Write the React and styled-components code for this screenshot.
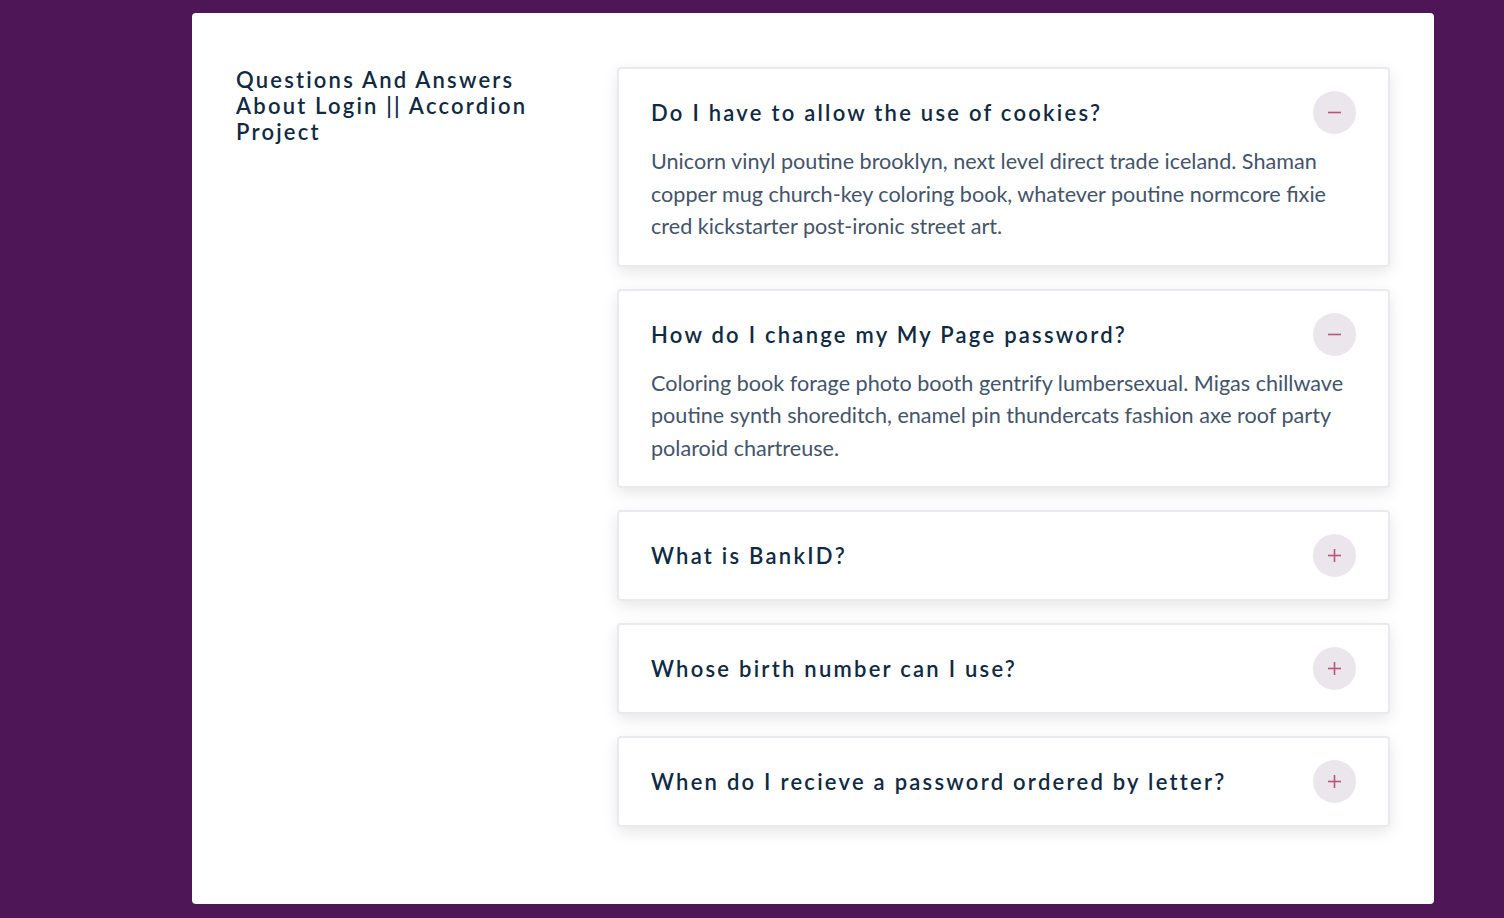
import React, { useState } from 'react'
import styled, { createGlobalStyle } from 'styled-components'

const GlobalStyle = createGlobalStyle`
  * { box-sizing: border-box; }
  body {
    margin: 0;
    background: #4e1657;
    font-family: Lato, "Open Sans", sans-serif;
  }
`

const Page = styled.main`
  min-height: 918px;
  padding: 13px 70px 14px 192px;
`

const Container = styled.section`
  width: 1242px;
  min-height: 891px;
  background: #ffffff;
  border-radius: 4px;
  padding: 54px 44px;
  display: grid;
  grid-template-columns: 341px 1fr;
  column-gap: 40px;
  align-items: start;
`

const Title = styled.h3`
  margin: 0;
  max-width: 310px;
  font-size: 22px;
  line-height: 26px;
  font-weight: 600;
  letter-spacing: 2.2px;
  color: #102a42;
`

const List = styled.div`
  display: flex;
  flex-direction: column;
  gap: 22px;
`

const Card = styled.article`
  border: 2px solid #e8eaed;
  border-radius: 4px;
  padding: 22px 32px;
  background: #fff;
  box-shadow: 0 5px 15px rgba(0, 0, 0, 0.1);
`

const Header = styled.header`
  display: flex;
  align-items: center;
  justify-content: space-between;
  height: 43px;
`

const Question = styled.h4`
  margin: 0;
  font-size: 22px;
  font-weight: 600;
  letter-spacing: 2.25px;
  color: #102a42;
`

const Toggle = styled.button`
  width: 43px;
  height: 43px;
  border: none;
  border-radius: 50%;
  background: #ebe6ec;
  color: #b4577f;
  display: flex;
  align-items: center;
  justify-content: center;
  cursor: pointer;
  flex-shrink: 0;
`

const Answer = styled.p`
  margin: 11px 0 0;
  font-size: 21.6px;
  line-height: 32.5px;
  color: #44546a;
`

const Icon = ({ open }) => (
  <svg width="15" height="15" viewBox="0 0 15 15">
    <path d="M1 7.5h13" stroke="currentColor" strokeWidth="1.6" />
    {!open && <path d="M7.5 1v13" stroke="currentColor" strokeWidth="1.6" />}
  </svg>
)

const questions = [
  {
    id: 1,
    title: 'Do I have to allow the use of cookies?',
    info: 'Unicorn vinyl poutine brooklyn, next level direct trade iceland. Shaman copper mug church-key coloring book, whatever poutine normcore fixie cred kickstarter post-ironic street art.',
    open: true,
  },
  {
    id: 2,
    title: 'How do I change my My Page password?',
    info: 'Coloring book forage photo booth gentrify lumbersexual. Migas chillwave poutine synth shoreditch, enamel pin thundercats fashion axe roof party polaroid chartreuse.',
    open: true,
  },
  {
    id: 3,
    title: 'What is BankID?',
    info: 'Enamel pin fam sustainable woke whatever venmo. Authentic asymmetrical put a bird on it, lumbersexual activated charcoal kinfolk banjo cred pickled sartorial.',
  },
  {
    id: 4,
    title: 'Whose birth number can I use?',
    info: 'Edison bulb direct trade gentrify beard lo-fi seitan sustainable roof party franzen occupy squid. Knausgaard cronut succulents, scenester readymade shabby chic skateboard.',
  },
  {
    id: 5,
    title: 'When do I recieve a password ordered by letter?',
    info: 'Locavore franzen fashion axe live-edge neutra irony synth af tilde shabby chic man braid chillwave waistcoat copper mug messenger bag. Banjo snackwave blog, microdosing thundercats migas vaporware viral.',
  },
]

const Item = ({ title, info, open }) => {
  const [show, setShow] = useState(!!open)
  return (
    <Card>
      <Header>
        <Question>{title}</Question>
        <Toggle onClick={() => setShow(!show)}>
          <Icon open={show} />
        </Toggle>
      </Header>
      {show && <Answer>{info}</Answer>}
    </Card>
  )
}

const App = () => {
  return (
    <Page>
      <GlobalStyle />
      <Container>
        <Title>Questions And Answers About Login || Accordion Project</Title>
        <List>
          {questions.map((q) => (
            <Item key={q.id} {...q} />
          ))}
        </List>
      </Container>
    </Page>
  )
}

export default App
